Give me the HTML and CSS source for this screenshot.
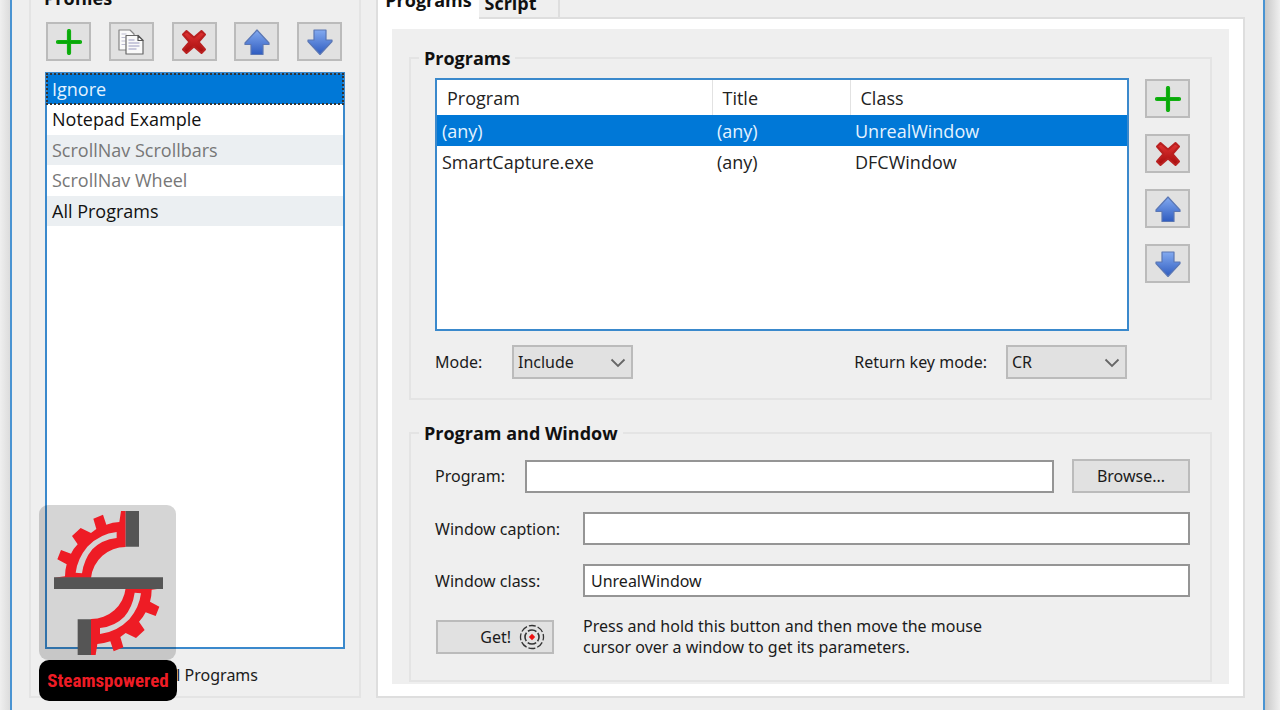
FILE: index.html
```html
<!DOCTYPE html>
<html lang="en">
<head>
<meta charset="utf-8">
<meta name="viewport" content="width=device-width, initial-scale=1">
<title>Profiles</title>
<link rel="stylesheet" href="styles.css">
</head>
<body>
<svg class="defs" aria-hidden="true">
  <defs>
    <linearGradient id="blue" x1="0" y1="0" x2="0" y2="1"><stop offset="0" stop-color="#83aaf0"/><stop offset="1" stop-color="#2f5cc0"/></linearGradient>
    <linearGradient id="red" x1="0" y1="0" x2="0" y2="1"><stop offset="0" stop-color="#e23434"/><stop offset="1" stop-color="#a50c0c"/></linearGradient>
    <symbol id="add" viewBox="0 0 26 26"><path d="M13 2v22M2 13h22" stroke="#12b012" stroke-width="4.200" stroke-linecap="round"/><path d="M13 2v22M2 13h22" stroke="#08a808" stroke-width="2"/></symbol>
    <symbol id="copy" viewBox="0 0 26 26">
      <g stroke="#858585" stroke-width="1.200" stroke-linejoin="round" fill="#fafafa">
        <path d="M1 1h11l4 4v16H1z"/><path d="M3.500 5h5M3.500 8.500h4M3.500 12h4M3.500 15.500h4" stroke="#bbbbd0"/>
        <path d="M8 6.500h12l5 5V25H8z" stroke="#686868"/><path d="M20 6.500v5h5z" stroke="#555"/>
        <path d="M10.500 11h6M10.500 14h11M10.500 17h11M10.500 20h8" stroke="#9a9ac0"/>
      </g>
    </symbol>
    <symbol id="remove" viewBox="0 0 26 26"><path d="M5.500 2L13 8.500 20.500 2 24 5.500 17.500 13 24 20.500 20.500 24 13 17.500 5.500 24 2 20.500 8.500 13 2 5.500z" fill="url(#red)" stroke="#b92020" stroke-width="2" stroke-linejoin="round"/></symbol>
    <symbol id="up" viewBox="0 0 26 26"><path d="M13 1l12 13v1.500h-6V25.500H7V15.500H1V14z" fill="url(#blue)" stroke="#5b77b4" stroke-width="1.200" stroke-linejoin="round"/></symbol>
    <symbol id="down" viewBox="0 0 26 26"><path d="M13 25.500L1 12.500V11h6V1h12v10h6v1.500z" fill="url(#blue)" stroke="#5b77b4" stroke-width="1.200" stroke-linejoin="round"/></symbol>
    <symbol id="chevron" viewBox="0 0 16 10"><path d="M1.500 1.500L8 8l6.500-6.500" fill="none" stroke="#666" stroke-width="1.800"/></symbol>
    <symbol id="gear" viewBox="0 0 411 465" overflow="visible">
      <path transform="translate(-27 -15)" d="M183 234A104 104 0 0 1 287 141V33H273L268 66Q248 67 229 74L219 44 190 56 199 87 183 99 152 84 126 108 143 133Q131 145 123 161L93 150 82 178 110 193Q105 210 105 229L72 233z" fill="#ee1c25"/>
      <path transform="translate(-27 -15)" d="M137 218Q142 176 172 140Q210 101 260 96V114Q215 119 187 148Q162 178 156 220z" fill="#d4d4d4"/>
      <path transform="translate(-27 -15)" d="M287 33h40v107h-40z" fill="#555"/>
    </symbol>
  </defs>
</svg>
<div class="desktop">
<main class="window">
  <fieldset class="group profiles">
    <legend>Profiles</legend>
    <div class="profiles-body">
      <div class="toolbar">
        <button class="tool" type="button" aria-label="Add profile"><svg><use href="#add"/></svg></button>
        <button class="tool" type="button" aria-label="Copy profile"><svg><use href="#copy"/></svg></button>
        <button class="tool" type="button" aria-label="Remove profile"><svg><use href="#remove"/></svg></button>
        <button class="tool" type="button" aria-label="Move profile up"><svg><use href="#up"/></svg></button>
        <button class="tool" type="button" aria-label="Move profile down"><svg><use href="#down"/></svg></button>
      </div>
      <ul class="list">
        <li class="selected">Ignore</li>
        <li>Notepad Example</li>
        <li class="off">ScrollNav Scrollbars</li>
        <li class="off">ScrollNav Wheel</li>
        <li>All Programs</li>
      </ul>
      <div class="active-profile">All Programs</div>
    </div>
    <div class="watermark">
      <svg class="mark" viewBox="0 0 411 465" aria-hidden="true">
        <use href="#gear" width="411" height="465"/>
        <use href="#gear" width="411" height="465" transform="rotate(180 208 234)"/>
        <path d="M45 217h327v35H45z" fill="#555"/>
      </svg>
      <div class="brand">Steamspowered</div>
    </div>
  </fieldset>

  <div class="editor">
    <div class="tabs" role="tablist">
      <button class="tab active" type="button" role="tab" aria-selected="true">Programs</button>
      <button class="tab" type="button" role="tab" aria-selected="false">Script</button>
    </div>
    <div class="pane">
      <div class="page">
        <fieldset class="group programs">
          <legend>Programs</legend>
          <div class="table-row">
            <div class="table-box">
              <table>
                <colgroup><col class="col-program"><col class="col-title"><col></colgroup>
                <thead><tr><th>Program</th><th>Title</th><th>Class</th></tr></thead>
                <tbody>
                  <tr class="selected"><td>(any)</td><td>(any)</td><td>UnrealWindow</td></tr>
                  <tr><td>SmartCapture.exe</td><td>(any)</td><td>DFCWindow</td></tr>
                </tbody>
              </table>
            </div>
            <div class="side">
              <button class="tool" type="button" aria-label="Add program"><svg><use href="#add"/></svg></button>
              <button class="tool" type="button" aria-label="Remove program"><svg><use href="#remove"/></svg></button>
              <button class="tool" type="button" aria-label="Move program up"><svg><use href="#up"/></svg></button>
              <button class="tool" type="button" aria-label="Move program down"><svg><use href="#down"/></svg></button>
            </div>
          </div>
          <div class="modes">
            <label for="mode">Mode:</label>
            <span class="combo"><select id="mode"><option>Include</option><option>Exclude</option></select><svg><use href="#chevron"/></svg></span>
            <label class="push" for="return">Return key mode:</label>
            <span class="combo"><select id="return"><option>CR</option><option>LF</option></select><svg><use href="#chevron"/></svg></span>
          </div>
        </fieldset>
        <fieldset class="group details">
          <legend>Program and Window</legend>
          <div class="field">
            <label class="short" for="program">Program:</label>
            <input id="program" type="text">
            <button class="button" type="button">Browse...</button>
          </div>
          <div class="field">
            <label for="caption">Window caption:</label>
            <input id="caption" type="text">
          </div>
          <div class="field">
            <label for="class">Window class:</label>
            <input id="class" type="text" value="UnrealWindow">
          </div>
          <div class="get-row">
            <button class="button get" type="button">Get!
              <svg viewBox="0 0 26 26" fill="none" stroke="#333" aria-hidden="true"><circle cx="13" cy="13" r="11.500" stroke-width="1.300" stroke-dasharray="7 2.030" stroke-dashoffset="3.500"/><circle cx="13" cy="13" r="7" stroke-width="1.600" stroke-dasharray="9 2" stroke-dashoffset="4.500"/><path d="M13 9.800l3.200 3.200-3.200 3.200L9.800 13z" fill="#ee1111" stroke="none"/></svg>
            </button>
            <p class="hint">Press and hold this button and then move the mouse<br>cursor over a window to get its parameters.</p>
          </div>
        </fieldset>
      </div>
    </div>
  </div>
</main>
</div>
</body>
</html>
```
FILE: styles.css
```css
* { box-sizing: border-box; }
body {
  margin: 0;
  overflow: hidden;
  background: #fff;
  color: #1b1b1b;
  font: 16px/22px "Noto Sans", sans-serif;
}
.defs { position: absolute; width: 0; height: 0; }
.desktop {
  display: flow-root;
  padding: 0 15px 0 10px;
  background: linear-gradient(90deg, #efefef 0, #dcdcdc 10px, #dcdcdc 50%, #c8c8c8 calc(100% - 15px), #efefef 100%);
}
.window {
  display: flex;
  gap: 15px;
  margin-top: -12px;
  padding: 0 18px 12px 17px;
  border: solid #4a94d2;
  border-width: 0 2px;
  background: #efefef;
}
.group {
  min-width: 0;
  margin: 0;
  border: 2px solid #e4e4e4;
}
legend {
  padding: 0 5px;
  color: #111;
  font: bold 18px/20px "Open Sans", sans-serif;
}
button, input, select { font: inherit; color: inherit; }
button, select {
  margin: 0;
  border: 2px solid #bbb;
  border-radius: 0;
  background: #e1e1e1;
}
.tool {
  display: grid;
  place-items: center;
  width: 45px;
  height: 39px;
  padding: 0;
}
.tool svg { width: 26px; height: 26px; }

.profiles {
  position: relative;
  flex: 0 0 332px;
  padding: 0 14px 10px;
}
.profiles legend { margin-left: -6px; }
.profiles-body { display: flex; flex-direction: column; height: 100%; padding-top: 14px; }
.toolbar { display: flex; justify-content: space-between; padding: 0 3px 0 1px; }
.list {
  flex: 1;
  margin: 11px 0 15px;
  padding: 0;
  border: 2px solid #3a89cc;
  background: #fff;
  list-style: none;
  font: 18px/30px "Open Sans", sans-serif;
}
.list li { height: 31px; padding-left: 5px; color: #111; }
.list li:nth-child(odd) { height: 30px; background: #ebeff2; }
.list .off { color: #777; }
.list li.selected { background: #0078d7; color: #e4f3ff; outline: 2px dotted #333; outline-offset: -1px; }
.active-profile { padding-right: 87px; text-align: right; }

.watermark { position: absolute; left: 8px; bottom: -5px; width: 138px; }
.mark { display: block; width: 137px; height: 155px; border-radius: 9px; background: rgba(0, 0, 0, .165); }
.brand {
  border-radius: 10px;
  background: #000;
  color: #ee1c25;
  font: bold 19px/41px "Roboto Condensed", "Liberation Sans Narrow", sans-serif;
  text-align: center;
}

.editor { flex: 1; min-width: 0; display: flex; flex-direction: column; }
.tabs { display: flex; height: 31px; border-bottom: 2px solid #dedede; }
.tab {
  height: 31px;
  padding: 0;
  border: solid #dedede;
  border-width: 0 2px 2px 0;
  background: #efefef;
  color: #111;
  font: bold 18px/20px "Open Sans", sans-serif;
}
.tab:last-child { flex: 0 0 81px; padding: 0 16px 0 0; }
.tab.active { flex: 0 0 103px; padding: 0 0 8px; border-width: 0 0 0 2px; background: #fff; }
.pane {
  flex: 1;
  padding: 10px 14px 12px;
  border: solid #dedede;
  border-width: 0 2px 2px;
  background: #fff;
}
.page { padding: 19px 17px 2px; background: #efefef; }
.page legend { margin-left: -16px; }

.programs { padding: 10px 20px 19px 24px; }
.table-row { display: flex; gap: 16px; }
.table-box { flex: 1; height: 253px; border: 2px solid #3a89cc; background: #fff; }
table {
  width: 100%;
  border-collapse: collapse;
  table-layout: fixed;
  color: #222;
  font: 18px/30px "Open Sans", sans-serif;
}
.col-program { width: 275px; }
.col-title { width: 138px; }
th { height: 35px; padding: 0 10px; border-right: 1px solid #e2e2e2; font-weight: normal; text-align: left; }
th:last-child { border-right: 0; }
td { height: 31px; padding: 0 5px; }
tr.selected { background: #0078d7; color: #e4f3ff; }
.side { display: flex; flex-direction: column; gap: 16px; padding-top: 1px; }
.modes { display: flex; align-items: center; margin-top: 14px; padding-right: 63px; }
.combo { position: relative; width: 121px; margin-left: 19px; }
.combo svg { position: absolute; right: 7px; top: 13px; width: 16px; height: 10px; pointer-events: none; }
select { display: block; appearance: none; width: 100%; height: 34px; padding: 0 4px; }
label[for="mode"] { width: 58px; }
.push { margin-left: auto; }

.details { margin-top: 23px; padding: 16px 20px 22px 24px; }
.field { display: flex; align-items: center; margin-bottom: 19px; }
label { white-space: nowrap; }
.field label { flex: 0 0 148px; }
.field .short { flex-basis: 90px; }
input {
  flex: 1;
  min-width: 0;
  height: 33px;
  padding: 0 6px;
  border: 2px solid #959595;
  border-radius: 0;
  background: #fff;
}
.button { width: 118px; height: 34px; padding: 0; }
.field .button { margin-left: 18px; }
.get-row { display: flex; align-items: center; gap: 29px; margin-top: 19px; }
.get { display: flex; align-items: center; justify-content: flex-end; gap: 8px; margin-left: 1px; padding-right: 7px; }
.get svg { width: 26px; height: 26px; }
.hint { margin: 0; line-height: 21px; }
```
